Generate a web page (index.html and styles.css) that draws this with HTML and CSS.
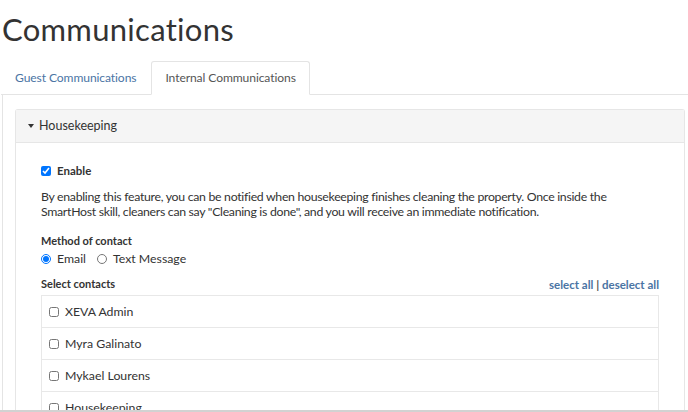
FILE: index.html
```html
<!DOCTYPE html>
<html lang="en">
<head>
  <meta charset="UTF-8">
  <title>Communications</title>
  <link rel="stylesheet" href="styles.css">
</head>
<body>
  <div class="page">
    <h1>Communications</h1>

    <ul class="nav-tabs">
      <li><a href="#">Guest Communications</a></li>
      <li class="active"><a href="#">Internal Communications</a></li>
    </ul>

    <div class="tab-content">
      <div class="panel">
        <div class="panel-heading">
          <span class="caret"></span>Housekeeping
        </div>
        <div class="panel-body">
          <label class="check-label">
            <input type="checkbox" checked>Enable
          </label>

          <p class="help">
            By enabling this feature, you can be notified when housekeeping finishes cleaning the property. Once inside the
            SmartHost skill, cleaners can say "Cleaning is done", and you will receive an immediate notification.
          </p>

          <div class="field-title">Method of contact</div>
          <div class="radios">
            <label><input type="radio" name="method" checked>Email</label>
            <label><input type="radio" name="method">Text Message</label>
          </div>

          <div class="contacts-head">
            <span class="field-title">Select contacts</span>
            <span class="links"><a href="#">select all</a> | <a href="#">deselect all</a></span>
          </div>

          <ul class="contacts">
            <li><label><input type="checkbox">XEVA Admin</label></li>
            <li><label><input type="checkbox">Myra Galinato</label></li>
            <li><label><input type="checkbox">Mykael Lourens</label></li>
            <li><label><input type="checkbox">Housekeeping</label></li>
          </ul>
        </div>
      </div>
    </div>
  </div>
  <div class="bottom-bar"></div>
</body>
</html>
```

FILE: styles.css
```css
body {
  margin: 0;
  font-family: Lato, "Noto Sans", sans-serif;
  font-size: 12.3px;
  color: #333;
  background: #fff;
}

.page {
  padding-left: 2px;
}

h1 {
  margin: 12px 0 14px;
  font-size: 31px;
  font-weight: 400;
  line-height: 35px;
  color: #333;
  letter-spacing: 0.3px;
}

.nav-tabs {
  display: flex;
  list-style: none;
  margin: 0 0 0 -1px;
  padding: 0;
  border-bottom: 1px solid #e4e4e4;
}

.nav-tabs li {
  margin: 0 1px -1px 0;
}

.nav-tabs a {
  display: block;
  padding: 0 13px;
  font-size: 12.1px;
  line-height: 32px;
  border: 1px solid transparent;
  border-radius: 3px 3px 0 0;
  color: #4a74a4;
  text-decoration: none;
  letter-spacing: -0.1px;
}

.nav-tabs .active a {
  color: #555;
  background: #fff;
  border-color: #e4e4e4 #e4e4e4 transparent;
}

.tab-content {
  border-left: 1px solid #e4e4e4;
  padding: 14px 3px 0 12px;
}

.panel {
  border: 1px solid #e6e6e6;
  border-bottom: none;
  border-radius: 3px 3px 0 0;
}

.panel-heading {
  background: #f5f5f5;
  border-bottom: 1px solid #e6e6e6;
  line-height: 32px;
  padding-left: 12px;
  font-size: 12.5px;
}

.caret {
  display: inline-block;
  width: 0;
  height: 0;
  margin-right: 5px;
  vertical-align: 2px;
  border-top: 4px solid #333;
  border-left: 3.5px solid transparent;
  border-right: 3.5px solid transparent;
}

.panel-body {
  padding: 20px 25px 0 25px;
}

input[type="checkbox"],
input[type="radio"] {
  margin: 0 6px 0 0;
  width: 10px;
  height: 10px;
  vertical-align: -1px;
}

.check-label {
  display: block;
  font-weight: 700;
  font-size: 11.5px;
  line-height: 16px;
  margin-bottom: 10px;
}

.help {
  margin: 0 0 14px;
  line-height: 15px;
  letter-spacing: -0.3px;
}

.field-title {
  font-weight: 700;
  font-size: 11px;
  line-height: 16px;
}

.radios {
  display: flex;
  gap: 11px;
  line-height: 20px;
  margin-bottom: 7px;
}

.contacts-head {
  display: flex;
  justify-content: space-between;
  line-height: 18px;
  margin-bottom: 1px;
}

.links {
  font-weight: 700;
  font-size: 11.5px;
  color: #555;
}

.links a {
  color: #4a74a4;
  text-decoration: none;
}

.contacts {
  list-style: none;
  margin: 0;
  padding: 0;
  border: 1px solid #e8e8e8;
}

.contacts li {
  border-top: 1px solid #e8e8e8;
  line-height: 31px;
  padding-left: 7px;
}

.contacts li:first-child {
  border-top: none;
}

.bottom-bar {
  position: fixed;
  left: 0;
  right: 0;
  bottom: 0;
  height: 2px;
  background: #d2d2d2;
}
```
